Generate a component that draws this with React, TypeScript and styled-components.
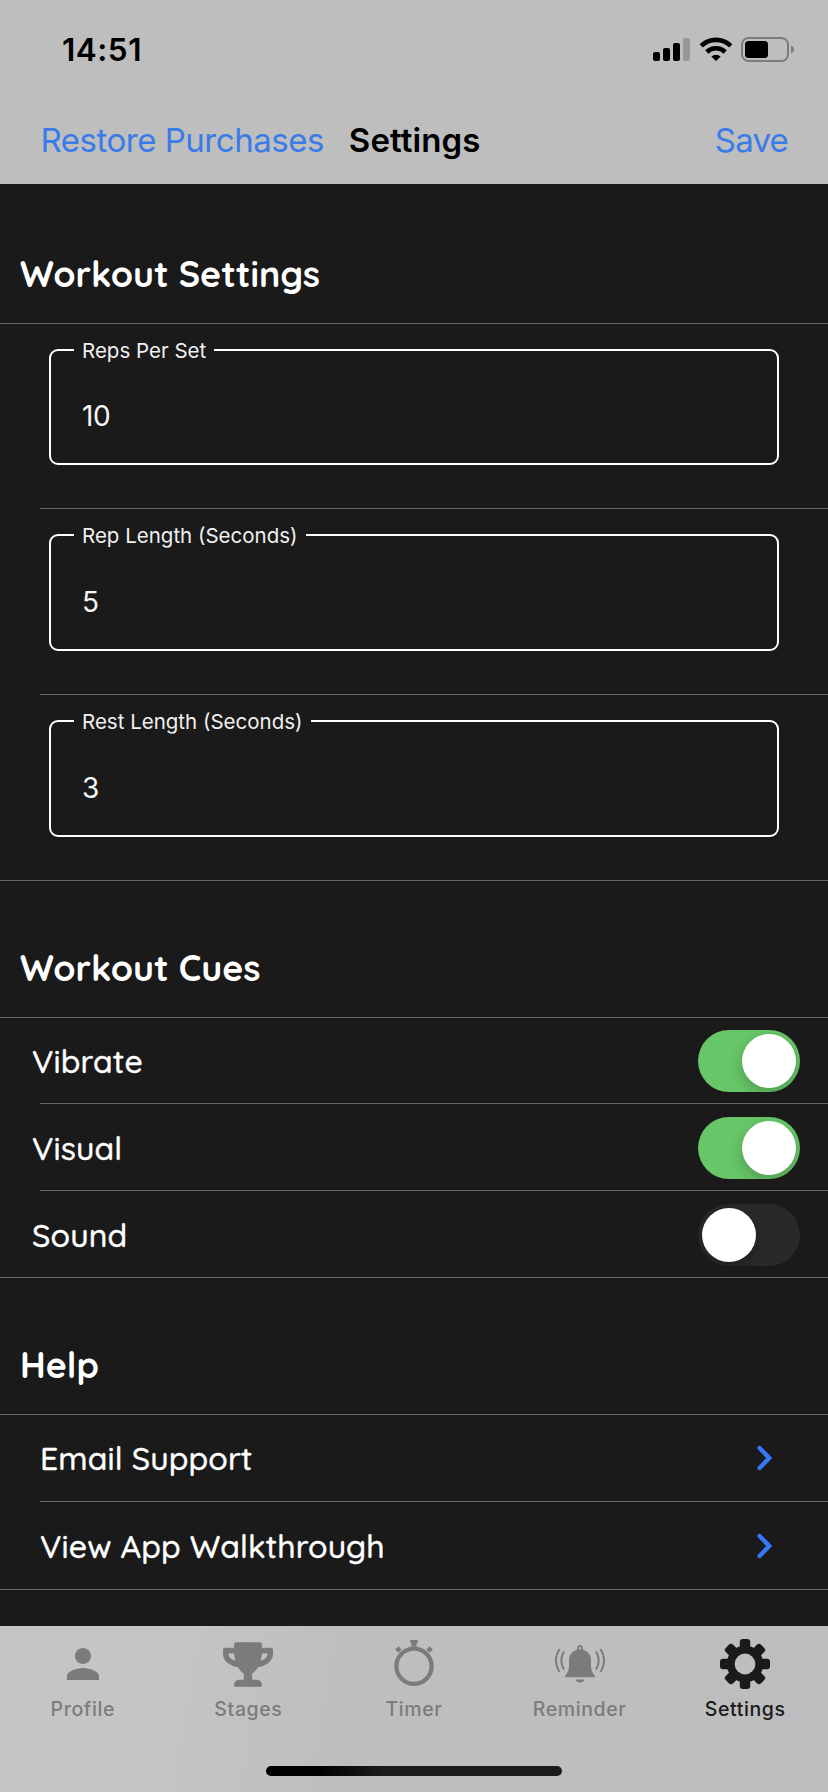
import React from "react";
import styled, { createGlobalStyle } from "styled-components";
import { FaTrophy } from "react-icons/fa";
import { MdPerson } from "react-icons/md";

const systemFont = `Inter, "Liberation Sans", sans-serif`;
const roundedFont = `Quicksand, Lato, sans-serif`;

const GlobalStyle = createGlobalStyle`
  * { box-sizing: border-box; }
  body { margin: 0; background: #1a1a1a; }
  button { border: 0; padding: 0; background: none; font: inherit; color: inherit; }
`;

const Screen = styled.div`
  width: 828px;
  height: 1792px;
  display: flex;
  flex-direction: column;
  background: #1a1a1a;
  color: #fff;
  font-family: ${systemFont};
  overflow: hidden;
`;

const Header = styled.header`
  height: 184px;
  flex: none;
  background: #bebebe;
  color: #000;
`;

const StatusBar = styled.div`
  height: 98px;
  display: flex;
  justify-content: space-between;
  padding: 0 33px 0 62px;
`;

const Clock = styled.div`
  padding-top: 30px;
  font-size: 31.5px;
  line-height: 40px;
  font-weight: 600;
  letter-spacing: 0.5px;
`;

const StatusIcons = styled.div`
  padding-top: 36px;
  svg { display: block; }
`;

const NavBar = styled.nav`
  display: flex;
  height: 86px;
  padding: 0 40px 0 40.5px;
  align-items: flex-start;
`;

const NavText = styled.button<{ $spacing: number; $title?: boolean }>`
  margin-top: 21px;
  margin-left: ${(p) => (p.$title ? "25px" : "0")};
  margin-right: ${(p) => (p.$title ? "auto" : "0")};
  font-size: 33px;
  line-height: 42px;
  white-space: nowrap;
  font-weight: ${(p) => (p.$title ? 600 : 400)};
  letter-spacing: ${(p) => p.$spacing}px;
  color: ${(p) => (p.$title ? "#000" : "#3a7bea")};
`;

const Content = styled.main`
  flex: 1;
  min-height: 0;
`;

const Divider = styled.div<{ $inset?: boolean }>`
  height: 1px;
  margin-left: ${(p) => (p.$inset ? 40 : 0)}px;
  background: #656565;
`;

const SectionTitle = styled.h2<{ $height: number }>`
  margin: 0;
  height: ${(p) => p.$height}px;
  padding: 0 0 27px 20px;
  display: flex;
  align-items: flex-end;
  font: 700 35.8px/44px ${roundedFont};
`;

const FieldRow = styled.div<{ $height: number }>`
  height: ${(p) => p.$height}px;
  padding: 15px 49px 43px;
`;

const Outline = styled.fieldset`
  height: 100%;
  margin: 0;
  min-width: 0;
  border: 2px solid #fff;
  border-radius: 9px;
  padding: 0 32px;
`;

const Legend = styled.legend<{ $width: number }>`
  width: ${(p) => p.$width}px;
  height: 22px;
  margin-left: -9px;
  padding: 0 0 0 8px;
  font-size: 20.5px;
  line-height: 24px;
  white-space: nowrap;
  color: #f0f0f0;
`;

const Value = styled.div<{ $top: number }>`
  padding-top: ${(p) => p.$top}px;
  font-size: 28px;
  line-height: 36px;
  letter-spacing: -0.3px;
  margin-left: -1px;
  color: #f5f5f5;
`;

const Row = styled.div<{ $height: number; $left: number; $right: number; $top: number }>`
  height: ${(p) => p.$height}px;
  padding: ${(p) => p.$top}px ${(p) => p.$right}px 0 ${(p) => p.$left}px;
  display: flex;
  align-items: center;
  justify-content: space-between;
`;

const RowLabel = styled.span`
  font: 500 32px/40px ${roundedFont};
  letter-spacing: 0.13px;
  -webkit-text-stroke: 0.4px currentColor;
`;

const Switch = styled.button<{ $on: boolean }>`
  width: 102px;
  height: 62px;
  padding: 4px;
  border-radius: 31px;
  display: flex;
  justify-content: ${(p) => (p.$on ? "flex-end" : "flex-start")};
  background: ${(p) => (p.$on ? "#67c667" : "#29292b")};
  overflow: hidden;
`;

const Knob = styled.span`
  width: 54px;
  height: 54px;
  border-radius: 50%;
  background: #fff;
  box-shadow: 0 5px 14px rgba(0, 0, 0, 0.22);
`;

const TabBar = styled.footer`
  height: 166px;
  flex: none;
  background: linear-gradient(100deg, #c5c5c6 0%, #c4c4c5 22%, #bebebf 42%, #bebebe 75%, #bdbdc0 100%);
`;

const Tabs = styled.div`
  height: 144px;
  display: grid;
  grid-template-columns: repeat(5, 1fr);
`;

const Tab = styled.button<{ $active?: boolean }>`
  display: flex;
  flex-direction: column;
  align-items: center;
  color: ${(p) => (p.$active ? "#1a1a1a" : "#7c7b7c")};
  svg { display: block; }
`;

const TabIcon = styled.span`
  height: 76px;
  display: flex;
  align-items: center;
`;

const TabLabel = styled.span`
  font-size: 19.5px;
  line-height: 24px;
  margin-top: -5px;
  font-weight: 500;
  letter-spacing: 0.6px;
`;

const HomeIndicator = styled.div`
  width: 296px;
  height: 10px;
  margin: -4px auto 0;
  border-radius: 5px;
  background: linear-gradient(90deg, #000 17%, #1c1c1c 40%);
`;

const Signals = () => (
  <svg width="146" height="28" viewBox="0 0 146 28">
    <rect x="4" y="16" width="7" height="9" rx="2" />
    <rect x="14" y="12" width="7" height="13" rx="2" />
    <rect x="24" y="7" width="7" height="18" rx="2" />
    <rect x="34" y="2" width="7" height="23" rx="2" fill="#989898" />
    <g fill="none" stroke="#000" strokeWidth="4.6">
      <path d="M52.2 9.8a21.5 21.5 0 0 1 29.6 0" />
      <path d="M57.8 16a13.2 13.2 0 0 1 18.4 0" />
    </g>
    <path d="M67 25l-4.7-4.6a7.2 7.2 0 0 1 9.4 0z" />
    <rect x="93" y="2" width="46" height="23" rx="6.5" fill="none" stroke="#7c7c7c" strokeWidth="2" />
    <rect x="96" y="5" width="23" height="17" rx="3.5" />
    <path d="M142 9.5c4 1.5 4 6.5 0 8z" fill="#7c7c7c" />
  </svg>
);

const Chevron = () => (
  <svg width="16" height="26" viewBox="0 0 16 26" fill="none" stroke="#3478f6" strokeWidth="4.4">
    <path d="M2.6 3L12.2 13L2.6 23" strokeLinecap="round" />
  </svg>
);

const Stopwatch = () => (
  <svg width="48" height="50" viewBox="0 0 48 50">
    <circle cx="24" cy="27.2" r="17.6" fill="none" stroke="currentColor" strokeWidth="4.2" />
    <path d="M20.2 1h7.600v2.600l-1.300 1v3h-5v-3l-1.300-1z" fill="currentColor" />
    <path d="M5.2 10.500l3.200-3.200 3.200 3.200-3.200 3.200zM36.400 10.500l3.200-3.200 3.200 3.200-3.200 3.200z" fill="currentColor" />
  </svg>
);

const RingingBell = () => (
  <svg width="50" height="40" viewBox="0 0 50 40">
    <path
      d="M10 33.300c0-1 .3-1.600 1.200-2.800 1.800-2.500 2.800-5 2.800-9.500v-4.500c0-5.500 3-9.500 7.800-10.600 0-2.800 1-4.800 3.200-4.800s3.200 2 3.200 4.800c4.800 1.100 7.800 5.100 7.800 10.600V21c0 4.500 1 7 2.800 9.500.9 1.200 1.200 1.800 1.200 2.800z"
      fill="currentColor"
    />
    <path d="M20.500 35.500h9c-.7 2-2.300 3-4.500 3s-3.800-1-4.500-3z" fill="currentColor" />
    <circle cx="25" cy="4.200" r="1.200" fill="#bebebe" />
    <g fill="none" stroke="currentColor" strokeWidth="2">
      <path d="M4.500 5C-.2 12.500-.2 20.500 4.500 28M9 7.500c-3.600 6-3.600 12 0 18M45.500 5c4.700 7.500 4.700 15.500 0 23M41 7.500c3.600 6 3.600 12 0 18" />
    </g>
  </svg>
);

const Gear = () => (
  <svg width="50" height="50" viewBox="0 0 50 50" fill="currentColor">
    {[0, 45, 90, 135].map((a) => (
      <rect key={a} x="19.8" y="0" width="10.4" height="50" rx="3" transform={`rotate(${a} 25 25)`} />
    ))}
    <circle cx="25" cy="25" r="18.3" />
    <circle cx="25" cy="25" r="10.4" fill="#bebebe" />
  </svg>
);

const fields = [
  { label: "Reps Per Set", value: "10", gap: 140, height: 184, top: 37 },
  { label: "Rep Length (Seconds)", value: "5", gap: 232, height: 185, top: 38 },
  { label: "Rest Length (Seconds)", value: "3", gap: 237, height: 185, top: 38 },
];

const cues = [
  { label: "Vibrate", on: true, height: 85 },
  { label: "Visual", on: true, height: 86 },
  { label: "Sound", on: false, height: 86 },
];

const help = [
  { label: "Email Support", height: 86, top: 0 },
  { label: "View App Walkthrough", height: 87, top: 1 },
];

const tabs = [
  { label: "Profile", icon: <MdPerson size={48} /> },
  { label: "Stages", icon: <FaTrophy size={45} style={{ width: 50 }} /> },
  { label: "Timer", icon: <Stopwatch /> },
  { label: "Reminder", icon: <RingingBell /> },
  { label: "Settings", icon: <Gear />, active: true },
];

export default function App() {
  return (
    <Screen>
      <GlobalStyle />
      <Header>
        <StatusBar>
          <Clock>14:51</Clock>
          <StatusIcons>
            <Signals />
          </StatusIcons>
        </StatusBar>
        <NavBar>
          <NavText $spacing={-0.48}>Restore Purchases</NavText>
          <NavText as="div" $title $spacing={0.1}>Settings</NavText>
          <NavText $spacing={-0.8}>Save</NavText>
        </NavBar>
      </Header>
      <Content>
        <SectionTitle $height={139}>Workout Settings</SectionTitle>
        <Divider />
        {fields.map((f, i) => (
          <React.Fragment key={f.label}>
            <FieldRow $height={f.height}>
              <Outline>
                <Legend $width={f.gap}>{f.label}</Legend>
                <Value $top={f.top}>{f.value}</Value>
              </Outline>
            </FieldRow>
            <Divider $inset={i < fields.length - 1} />
          </React.Fragment>
        ))}
        <SectionTitle $height={136}>Workout Cues</SectionTitle>
        <Divider />
        {cues.map((c, i) => (
          <React.Fragment key={c.label}>
            <Row $height={c.height} $left={32} $right={28} $top={1}>
              <RowLabel>{c.label}</RowLabel>
              <Switch $on={c.on} role="switch" aria-checked={c.on} aria-label={c.label}>
                <Knob />
              </Switch>
            </Row>
            <Divider $inset={i < cues.length - 1} />
          </React.Fragment>
        ))}
        <SectionTitle $height={136}>Help</SectionTitle>
        <Divider />
        {help.map((h, i) => (
          <React.Fragment key={h.label}>
            <Row $height={h.height} $left={40} $right={55} $top={h.top}>
              <RowLabel>{h.label}</RowLabel>
              <Chevron />
            </Row>
            <Divider $inset={i < help.length - 1} />
          </React.Fragment>
        ))}
      </Content>
      <TabBar>
        <Tabs>
          {tabs.map((t) => (
            <Tab key={t.label} $active={t.active}>
              <TabIcon>{t.icon}</TabIcon>
              <TabLabel>{t.label}</TabLabel>
            </Tab>
          ))}
        </Tabs>
        <HomeIndicator />
      </TabBar>
    </Screen>
  );
}
